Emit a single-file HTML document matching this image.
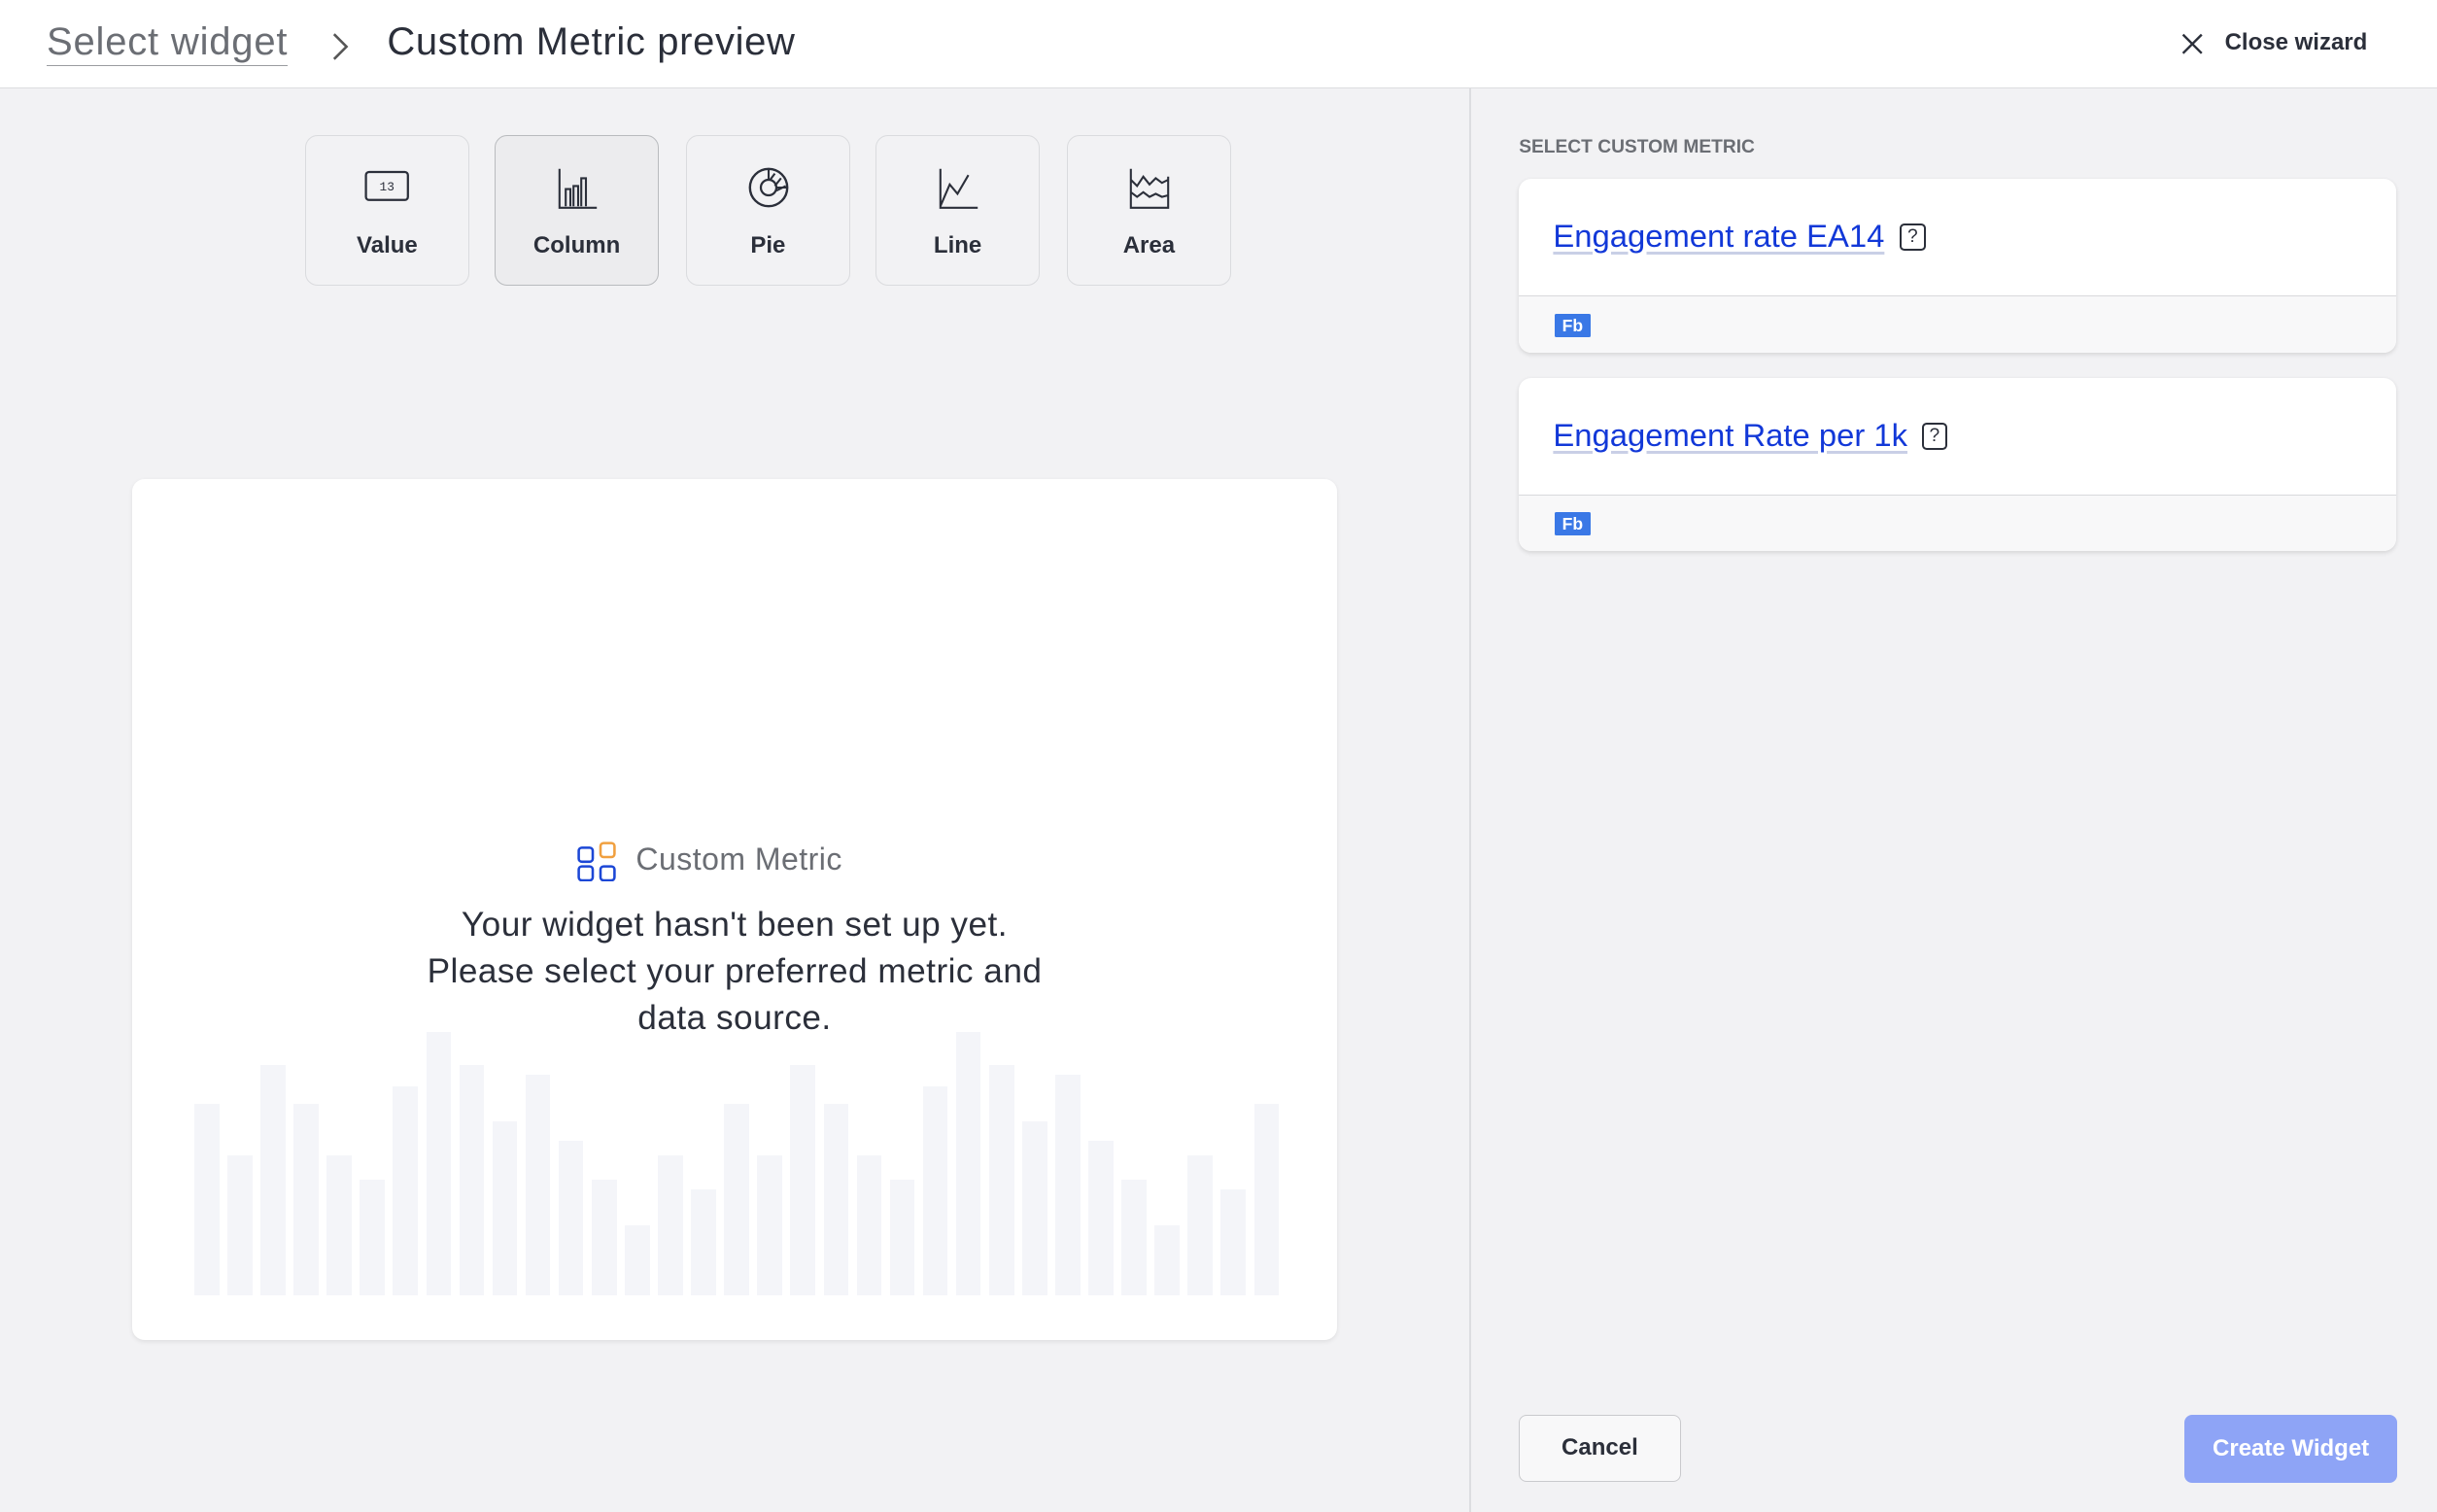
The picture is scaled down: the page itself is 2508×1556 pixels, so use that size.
<!DOCTYPE html>
<html><head><meta charset="utf-8"><style>
html,body{margin:0;padding:0;width:2508px;height:1556px;overflow:hidden;background:#f2f2f4}
#w{zoom:1.6;width:1568px;height:973px;position:relative;font-family:"Liberation Sans",Arial,sans-serif;color:#2b2f3a}
.hdr{position:absolute;left:0;top:0;width:1568px;height:56px;background:#fff;border-bottom:1px solid #dcdde0}
.a{position:absolute}
.tile{position:absolute;top:87px;width:106px;height:97px;border:1px solid #dadbde;border-radius:8px;background:#f2f2f4;box-sizing:border-box;text-align:center}
.tile svg{position:absolute;left:38px;top:18px}
.tile span{position:absolute;left:0;right:0;top:62px;font-weight:bold;font-size:15px;color:#2b2f3a}
.card{position:absolute;left:977px;width:564px;background:#fff;border-radius:8px;box-shadow:0 1px 3px rgba(0,0,0,.12);overflow:hidden}
.card .t{height:75px;border-bottom:1px solid #d8d9dc;position:relative}
.card .t a{position:absolute;left:22px;top:25px;font-size:20.5px;color:#1238d8;text-decoration:underline;text-decoration-color:#c9cfe6;text-underline-offset:3px;white-space:nowrap}
.q{display:inline-block;width:14px;height:15px;border:1.5px solid #2b2f3a;border-radius:3px;font-size:12px;line-height:15px;text-align:center;color:#2b2f3a;vertical-align:2px;margin-left:6px}
.card .b{height:36px;background:#f8f8f9;position:relative}
.fb{position:absolute;left:23px;top:11px;width:23px;height:15px;background:#3a78e6;color:#fff;font-size:11px;font-weight:bold;line-height:15px;text-align:center;border-radius:1px}
.bar{position:absolute;bottom:29px;width:16px;background:#f4f5f9}
</style></head><body><div id="w">
<div class="hdr">
 <div class="a" style="left:30px;top:12px;font-size:25px;color:#6b6e74;border-bottom:1px solid #9a9ca1;line-height:30px;letter-spacing:0.5px">Select widget</div>
 <svg class="a" style="left:212px;top:20px" width="14" height="20"><path d="M3 2l8 8-8 8" fill="none" stroke="#555" stroke-width="1.6"/></svg>
 <div class="a" style="left:249px;top:12px;font-size:25px;color:#2b2f3a;line-height:30px;letter-spacing:0.4px">Custom Metric preview</div>
 <svg class="a" style="left:1403px;top:21px" width="14" height="14"><path d="M1 1l12 12M13 1L1 13" stroke="#2b2f3a" stroke-width="1.5"/></svg>
 <div class="a" style="left:1431px;top:19px;font-size:15px;font-weight:bold">Close wizard</div>
</div>
<div class="a" style="left:945px;top:57px;width:1px;height:916px;background:#dcdde0"></div>

<div class="tile" style="left:196px"><svg width="30" height="26"><rect x="1" y="5" width="27" height="18" rx="2" fill="none" stroke="#2b2f3a" stroke-width="1.4"/><text x="14.5" y="17" font-size="8" text-anchor="middle" font-family="Liberation Mono" fill="#2b2f3a">13</text></svg><span>Value</span></div>
<div class="tile" style="left:318px;background:#ececee;border-color:#b9bbbe"><svg width="30" height="30"><path d="M3 3v25h24M7 27v-11h3v11M12 27v-13h3v13M17 27v-18h3v18" fill="none" stroke="#2b2f3a" stroke-width="1.3"/></svg><span>Column</span></div>
<div class="tile" style="left:441px"><svg width="30" height="30"><circle cx="15" cy="15" r="12" fill="none" stroke="#2b2f3a" stroke-width="1.5"/><circle cx="15" cy="15" r="5" fill="none" stroke="#2b2f3a" stroke-width="1.4"/><path d="M15 3v7M20 15h7M19 6l-3 4M23 9l-4 5M26 14l-6 3" stroke="#2b2f3a" stroke-width="1.3"/></svg><span>Pie</span></div>
<div class="tile" style="left:563px"><svg width="30" height="30"><path d="M3 3v25h24M3 27l6-14 5 6 7-12" fill="none" stroke="#2b2f3a" stroke-width="1.3"/></svg><span>Line</span></div>
<div class="tile" style="left:686px"><svg width="30" height="30"><path d="M3 3v25h24v-20M3 10l4 4 4-6 4 5 4-4 4 3 4-2M3 18l4 3 4-3 4 3 4-2 4 2 4-1" fill="none" stroke="#2b2f3a" stroke-width="1.3"/></svg><span>Area</span></div>

<div class="a" style="left:85px;top:308px;width:775px;height:554px;background:#fff;border-radius:8px;box-shadow:0 1px 3px rgba(0,0,0,.08)">
<div class="bar" style="left:40px;height:123px"></div>
<div class="bar" style="left:61.3px;height:90px"></div>
<div class="bar" style="left:82.6px;height:148px"></div>
<div class="bar" style="left:103.9px;height:123px"></div>
<div class="bar" style="left:125.2px;height:90px"></div>
<div class="bar" style="left:146.5px;height:74px"></div>
<div class="bar" style="left:167.8px;height:134px"></div>
<div class="bar" style="left:189.1px;height:169px"></div>
<div class="bar" style="left:210.4px;height:148px"></div>
<div class="bar" style="left:231.7px;height:112px"></div>
<div class="bar" style="left:253px;height:142px"></div>
<div class="bar" style="left:274.3px;height:99px"></div>
<div class="bar" style="left:295.6px;height:74px"></div>
<div class="bar" style="left:316.9px;height:45px"></div>
<div class="bar" style="left:338.2px;height:90px"></div>
<div class="bar" style="left:359.5px;height:68px"></div>
<div class="bar" style="left:380.8px;height:123px"></div>
<div class="bar" style="left:402.1px;height:90px"></div>
<div class="bar" style="left:423.4px;height:148px"></div>
<div class="bar" style="left:444.7px;height:123px"></div>
<div class="bar" style="left:466px;height:90px"></div>
<div class="bar" style="left:487.3px;height:74px"></div>
<div class="bar" style="left:508.6px;height:134px"></div>
<div class="bar" style="left:529.9px;height:169px"></div>
<div class="bar" style="left:551.2px;height:148px"></div>
<div class="bar" style="left:572.5px;height:112px"></div>
<div class="bar" style="left:593.8px;height:142px"></div>
<div class="bar" style="left:615.1px;height:99px"></div>
<div class="bar" style="left:636.4px;height:74px"></div>
<div class="bar" style="left:657.7px;height:45px"></div>
<div class="bar" style="left:679px;height:90px"></div>
<div class="bar" style="left:700.3px;height:68px"></div>
<div class="bar" style="left:721.6px;height:123px"></div>
 <svg class="a" style="left:286px;top:233px" width="26" height="26"><rect x="1" y="4" width="9" height="9" rx="2" fill="none" stroke="#1c47d6" stroke-width="1.6"/><rect x="15" y="1" width="9" height="9" rx="2" fill="none" stroke="#f0a040" stroke-width="1.6"/><rect x="1" y="16" width="9" height="9" rx="2" fill="none" stroke="#1c47d6" stroke-width="1.6"/><rect x="15" y="16" width="9" height="9" rx="2" fill="none" stroke="#1c47d6" stroke-width="1.6"/></svg>
 <div class="a" style="left:324px;top:233px;font-size:20px;color:#6b6e74;letter-spacing:0.3px">Custom Metric</div>
 <div class="a" style="left:0;width:775px;top:272px;text-align:center;font-size:22px;line-height:30px;color:#2b2f3a;letter-spacing:0.3px">Your widget hasn't been set up yet.<br>Please select your preferred metric and<br>data source.</div>
</div>

<div class="a" style="left:977px;top:88px;font-size:12px;font-weight:bold;color:#6b6e74">SELECT CUSTOM METRIC</div>
<div class="card" style="top:115px"><div class="t"><a>Engagement rate EA14</a><span class="q a" style="left:245px;top:29px;margin:0">?</span></div><div class="b"><div class="fb">Fb</div></div></div>
<div class="card" style="top:243px"><div class="t"><a>Engagement Rate per 1k</a><span class="q a" style="left:259px;top:29px;margin:0">?</span></div><div class="b"><div class="fb">Fb</div></div></div>

<div class="a" style="left:977px;top:910px;width:104px;height:43px;border:1px solid #c9cacd;border-radius:5px;box-sizing:border-box;background:#f8f8f9;text-align:center;line-height:41px;font-weight:bold;font-size:15px">Cancel</div>
<div class="a" style="left:1405px;top:910px;width:137px;height:44px;border-radius:5px;background:#8ea4f6;color:#fff;text-align:center;line-height:44px;font-weight:bold;font-size:15px">Create Widget</div>
</div>
</body></html>
